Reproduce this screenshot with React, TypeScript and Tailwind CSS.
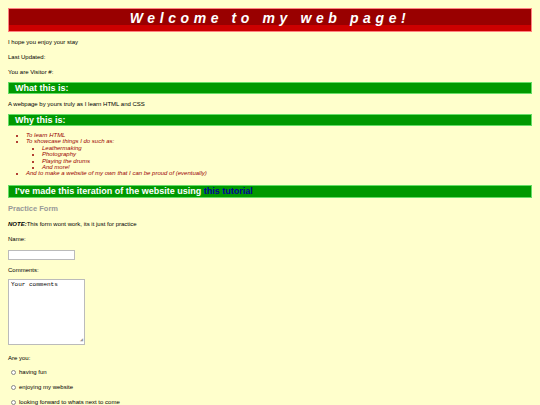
import React from 'react';

const Bar = ({ children, big }: { children: React.ReactNode; big?: boolean }) => (
  <div
    className={`border border-[#66dd66] bg-[#009900] pl-[6px] text-[9px] font-bold text-white ${
      big ? 'h-[13px] leading-[11px]' : 'h-[12px] leading-[10px]'
    }`}
  >
    {children}
  </div>
);

export default function App() {
  return (
    <div className="min-h-screen bg-[#ffffcc] px-2 pt-2 font-['Liberation_Sans',Arial,sans-serif] text-[6px] text-black">
      <div className="flex h-[24px] items-center justify-center border border-[#ff8080] bg-[linear-gradient(to_bottom,#990000_0,#990000_16px,#cc0000_16px,#cc0000_100%)] pb-[3px] text-[14px] font-bold italic tracking-[4.6px] text-white">
        Welcome to my web page!
      </div>

      <p className="mt-[6px] leading-[8px]">I hope you enjoy your stay</p>
      <p className="mt-[7px] leading-[8px]">Last Updated:</p>
      <p className="mt-[7px] leading-[8px]">You are Visitor #:</p>

      <div className="mt-[6px]">
        <Bar>What this is:</Bar>
      </div>
      <p className="mt-[6px] leading-[8px]">A webpage by yours truly as I learn HTML and CSS</p>

      <div className="mt-[6px]">
        <Bar>Why this is:</Bar>
      </div>
      <ul className="mt-[6px] list-disc pl-[18px] text-[6px] italic leading-[6.4px] text-[#990000]">
        <li>To learn HTML</li>
        <li>
          To showcase things I do such as:
          <ul className="list-disc pl-[16px]">
            <li>Leathermaking</li>
            <li>Photography</li>
            <li>Playing the drums</li>
            <li>And more!</li>
          </ul>
        </li>
        <li>And to make a website of my own that I can be proud of (eventually)</li>
      </ul>

      <div className="mt-[8px]">
        <Bar big>
          I've made this iteration of the website using <span className="text-[#000099]">this tutorial</span>
        </Bar>
      </div>

      <p className="mt-[6px] text-[7.5px] font-bold leading-[10px] text-[#999999]">Practice Form</p>

      <p className="mt-[6px] leading-[8px]">
        <b className="italic">NOTE:</b>This form wont work, its it just for practice
      </p>
      <p className="mt-[7px] leading-[8px]">Name:</p>
      <div className="mt-[7px] h-[10px] w-[67px] border border-[#bbbbbb] bg-white" />
      <p className="mt-[6px] leading-[8px]">Comments:</p>
      <div className="relative mt-[5px] h-[66px] w-[77px] border border-[#bbbbbb] bg-white px-[2px] pt-[1px] font-['Liberation_Mono',monospace] text-[6px] leading-[7px]">
        Your comments
        <span className="absolute bottom-[1px] right-[1px] text-[5px] leading-[5px] text-[#999999]">◢</span>
      </div>
      <p className="mt-[9px] leading-[8px]">Are you:</p>
      {['having fun', 'enjoying my website', 'looking forward to whats next to come'].map((t) => (
        <div key={t} className="mt-[7px] flex h-[8px] items-center pl-[3px]">
          <span className="mr-[3px] h-[5px] w-[5px] rounded-full border border-[#888888] bg-white" />
          <span>{t}</span>
        </div>
      ))}
    </div>
  );
}
